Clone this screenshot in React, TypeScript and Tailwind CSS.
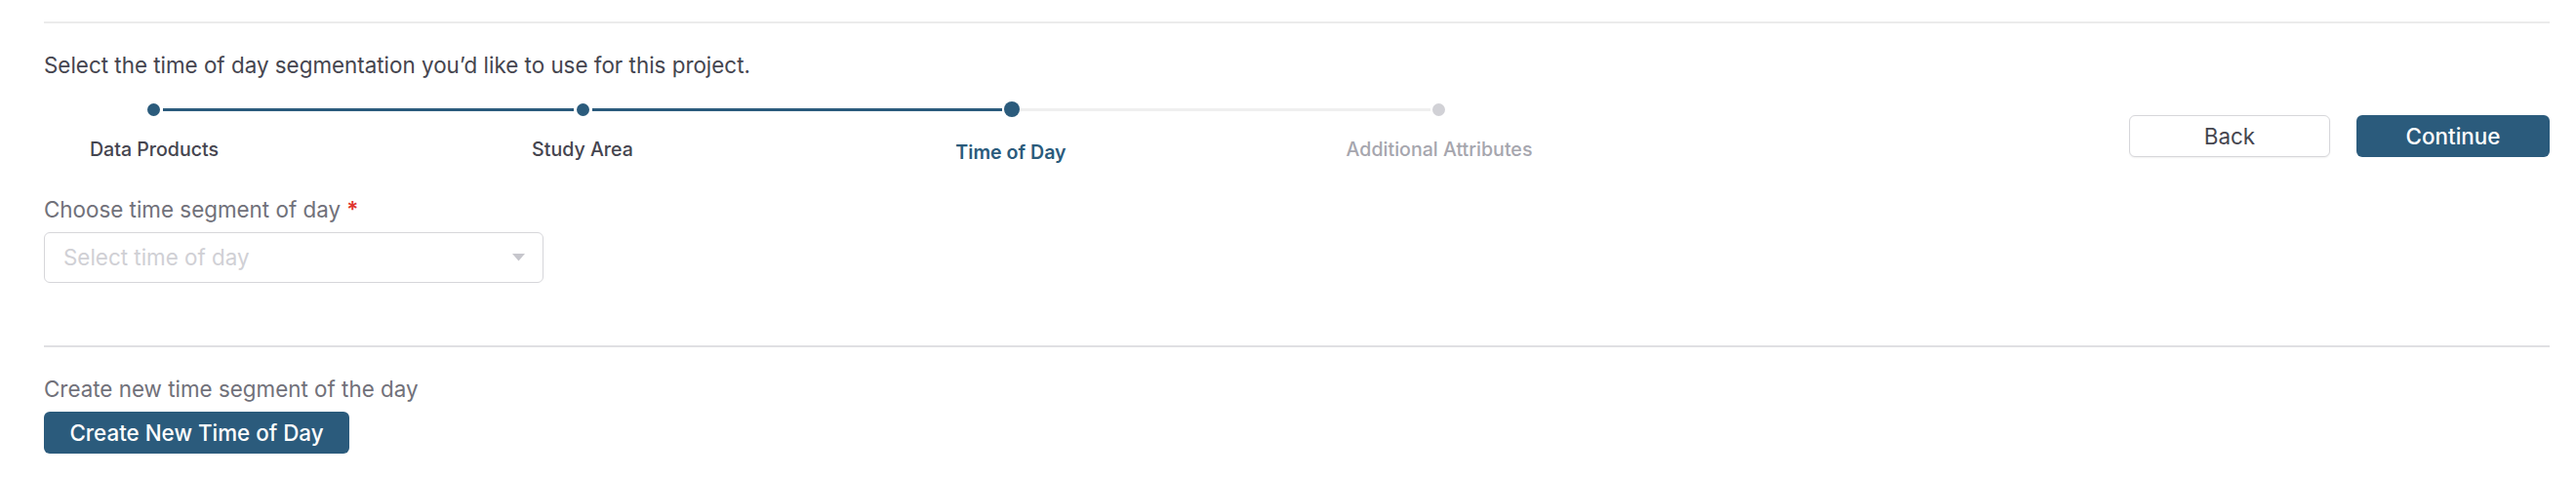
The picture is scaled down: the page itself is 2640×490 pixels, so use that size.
import React from "react";

const steps = [
  { label: "Data Products", state: "done" },
  { label: "Study Area", state: "done" },
  { label: "Time of Day", state: "active" },
  { label: "Additional Attributes", state: "todo" },
];

const Dot = ({ state }: { state: string }) => {
  if (state === "active")
    return <div className="w-[16px] h-[16px] rounded-full bg-[#2b5b7c] shrink-0" />;
  if (state === "done")
    return <div className="w-[13px] h-[13px] rounded-full bg-[#2b5b7c] shrink-0" />;
  return <div className="w-[13px] h-[13px] rounded-full bg-[#d1d1d6] shrink-0" />;
};

const Stepper = () => (
  <div className="flex flex-col">
    <div className="flex items-center w-[1330px] ml-[106px] h-[16px]">
      <Dot state="done" />
      <div className="flex-1 h-[3px] bg-[#2b5b7c] mx-[3px]" />
      <Dot state="done" />
      <div className="flex-1 h-[3px] bg-[#2b5b7c] ml-[3px] mr-[2px]" />
      <Dot state="active" />
      <div className="flex-1 h-[3px] bg-[#efefef] mr-[2px]" />
      <Dot state="todo" />
    </div>
    <div className="flex gap-[213px] mt-[21px]">
      {steps.map((s) => (
        <div
          key={s.label}
          className={
            s.state === "active"
              ? "w-[226px] text-center text-[19.6px] leading-[24px] font-semibold text-[#2b5b7c] pt-[3px]"
              : s.state === "done"
              ? "w-[226px] text-center text-[19.6px] leading-[24px] font-medium text-[#45454f]"
              : "w-[226px] text-center text-[19.6px] leading-[24px] font-medium text-[#a6a6ae]"
          }
        >
          {s.label}
        </div>
      ))}
    </div>
  </div>
);

export default function App() {
  return (
    <div className="w-[2640px] h-[490px] bg-white pl-[45px] pr-[27px] font-['Inter',sans-serif] overflow-hidden">
      <div className="pt-[22px]">
        <div className="h-[2px] bg-[#ebebeb]" />
      </div>

      <p className="mt-[29px] text-[22.4px] leading-[28px] text-[#45454f]">
        Select the time of day segmentation you’d like to use for this project.
      </p>

      <div className="flex justify-between items-start mt-[23px]">
        <Stepper />
        <div className="flex gap-[27px] pt-[14px]">
          <button className="w-[206px] h-[43px] rounded-[6px] border border-[#d6d6da] bg-white text-[22.4px] text-[#45454f] shadow-[0_1px_2px_rgba(0,0,0,0.06)]">
            Back
          </button>
          <button className="w-[198px] h-[43px] rounded-[6px] bg-[#2b5b7c] text-[22.4px] font-medium text-white">
            Continue
          </button>
        </div>
      </div>

      <div className="mt-[33px] text-[22.4px] leading-[28px] text-[#71717a]">
        Choose time segment of day <span className="text-[#e0342f] font-semibold">*</span>
      </div>
      <div className="mt-[9px] w-[512px] h-[52px] rounded-[6px] border border-[#d6d6da] flex items-center justify-between pl-[19px] pr-[18px]">
        <span className="text-[22.4px] text-[#d0d0d5]">Select time of day</span>
        <svg width="13" height="8" viewBox="0 0 13 8">
          <path d="M0 0h13L6.5 7.5z" fill="#c6c6cc" />
        </svg>
      </div>

      <div className="mt-[64px] h-[2px] bg-[#e0e0e3]" />

      <div className="mt-[29px] text-[22.4px] leading-[28px] text-[#71717a]">
        Create new time segment of the day
      </div>
      <button className="mt-[9px] w-[313px] h-[43px] rounded-[6px] bg-[#2b5b7c] text-[22.4px] font-medium text-white">
        Create New Time of Day
      </button>
    </div>
  );
}
